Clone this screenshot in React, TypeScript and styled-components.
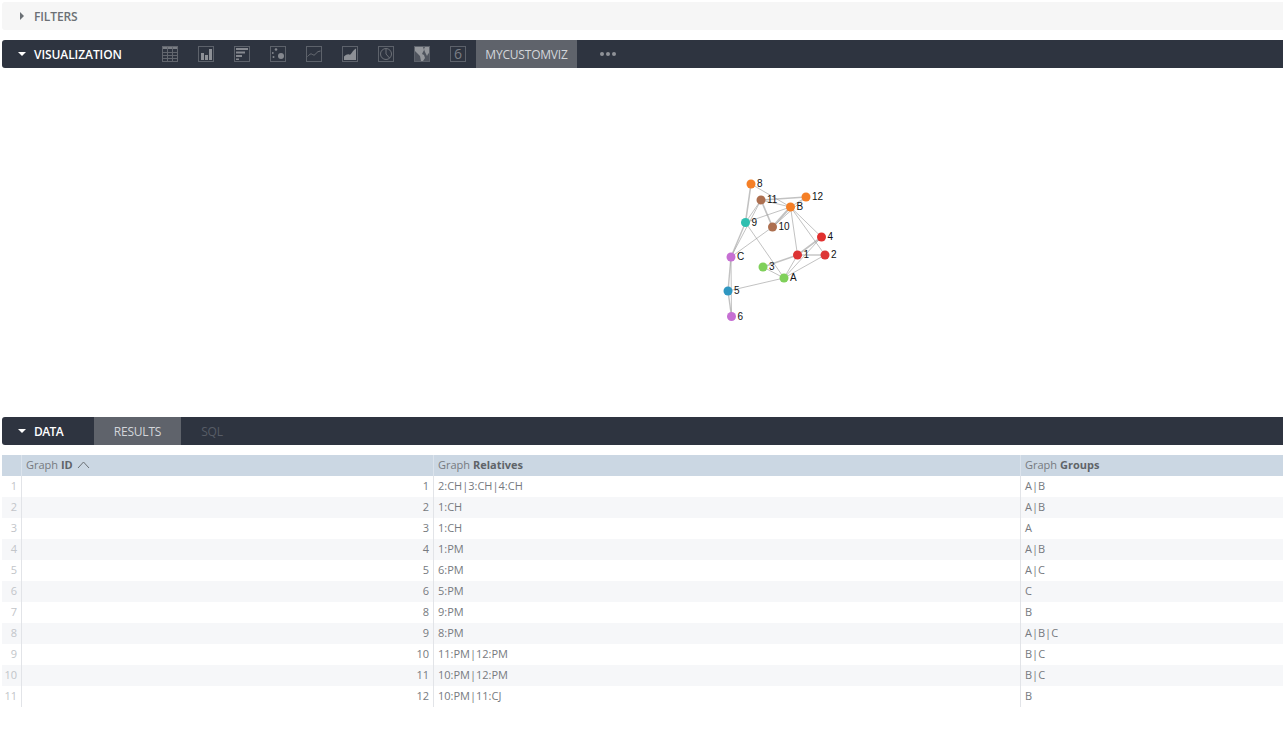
import React from "react";
import styled, { createGlobalStyle } from "styled-components";

const Global = createGlobalStyle`
  html, body { margin: 0; padding: 0; background: #fff; }
  body { font-family: "Open Sans", "Liberation Sans", sans-serif; color: #64686e; overflow: hidden; }
`;

const Page = styled.div`
  width: 1283px;
  height: 735px;
  padding: 2px 0 0 2px;
  box-sizing: border-box;
  display: flex;
  flex-direction: column;
  overflow: hidden;
`;

const FilterBar = styled.div`
  height: 28px;
  flex: none;
  background: #f6f6f6;
  border-radius: 3px 0 0 3px;
  display: flex;
  align-items: center;
  padding-left: 15px;
  gap: 7px;
  margin-bottom: 10px;
`;

const FilterLabel = styled.span`
  font-size: 12px;
  font-weight: 600;
  letter-spacing: -0.1px;
  color: #6b7075;
  text-transform: uppercase;
`;

const DarkBar = styled.div`
  height: 28px;
  flex: none;
  background: #2e3440;
  border-radius: 3px 0 0 3px;
  display: flex;
  align-items: stretch;
`;

const BarTitle = styled.div<{ $width: number; $tight?: boolean }>`
  width: ${(p) => p.$width}px;
  flex: none;
  box-sizing: border-box;
  display: flex;
  align-items: center;
  padding-left: 15px;
  gap: 7px;
  color: #fff;
  font-size: 12px;
  font-weight: 600;
  letter-spacing: ${(p) => (p.$tight ? "-0.6px" : "-0.08px")};
`;

const IconRow = styled.div`
  display: flex;
  align-items: center;
  gap: 20px;
  padding-right: 10px;
`;

const VizIcon = styled.svg`
  width: 16px;
  height: 16px;
  flex: none;
  display: block;
`;

const NumberIcon = styled.div`
  width: 16px;
  height: 16px;
  flex: none;
  box-sizing: border-box;
  border: 1px solid #5d626b;
  font-size: 14px;
  line-height: 14px;
  text-align: center;
  color: #7b7f86;
`;

const TabButton = styled.div<{ $active?: boolean; $muted?: boolean; $width: number }>`
  width: ${(p) => p.$width}px;
  flex: none;
  display: flex;
  align-items: center;
  justify-content: center;
  font-size: 12px;
  letter-spacing: -0.2px;
  background: ${(p) => (p.$active ? "#5f636b" : "transparent")};
  color: ${(p) => (p.$muted ? "#575c66" : "#d3d6da")};
`;

const Dots = styled.div`
  margin-left: 23px;
  display: flex;
  align-items: center;
  gap: 2px;
`;

const Dot = styled.span`
  width: 4px;
  height: 4px;
  border-radius: 50%;
  background: #8f9298;
`;

const VizPanel = styled.div`
  height: 349px;
  flex: none;
`;

const Graph = styled.svg`
  display: block;
  width: 1281px;
  height: 349px;
`;

const NodeLabel = styled.text`
  font-family: "Liberation Sans", Arial, sans-serif;
  font-size: 10px;
  fill: #111;
`;

const DataTable = styled.div`
  margin-top: 10px;
  display: grid;
  grid-template-columns: 20px 412px 587px 262px;
  font-size: 11px;
  line-height: 20px;
`;

const Cell = styled.div<{ $stripe?: boolean; $right?: boolean; $head?: boolean; $index?: boolean }>`
  height: 21px;
  box-sizing: border-box;
  white-space: nowrap;
  padding: ${(p) => (p.$index ? "0 4px 0 0" : "0 4px")};
  text-align: ${(p) => (p.$right || p.$index ? "right" : "left")};
  color: ${(p) => (p.$index ? "#c2c5c9" : "#767a80")};
  background: ${(p) => (p.$head ? "#cbd7e3" : p.$stripe ? "#f6f7f9" : "#fff")};
  border-right: 1px solid ${(p) => (p.$head ? "#dbe3ec" : "#e2e4e8")};
  &:nth-child(4n) { border-right: 0; }
`;

const HeadStrong = styled.strong`
  font-weight: 700;
  color: #5f6469;
`;

const SortIcon = styled.svg`
  width: 13px;
  height: 8px;
  margin-left: 4px;
  vertical-align: 0;
`;

type Edge = [string, string, number?];

const nodes: Record<string, { x: number; y: number; c: string }> = {
  "8": { x: 751, y: 116, c: "#f57f26" },
  "11": { x: 761, y: 132, c: "#ad6f4f" },
  "12": { x: 806, y: 129, c: "#f57f26" },
  B: { x: 790.5, y: 139, c: "#f57f26" },
  "9": { x: 745.5, y: 154.5, c: "#2fbfb0" },
  "10": { x: 772.5, y: 159, c: "#ad6f4f" },
  "4": { x: 821.5, y: 169, c: "#e1302f" },
  C: { x: 731, y: 189, c: "#c66fd3" },
  "1": { x: 797.5, y: 187, c: "#dd3434" },
  "2": { x: 825, y: 187, c: "#dd3434" },
  "3": { x: 763, y: 199, c: "#7fd05a" },
  A: { x: 784, y: 210, c: "#7fd05a" },
  "5": { x: 728, y: 223, c: "#2f97c1" },
  "6": { x: 731.5, y: 248.5, c: "#c66fd3" },
};

const edges: Edge[] = [
  ["8", "9", 1.6], ["8", "B"], ["11", "B"], ["11", "12", 1.6], ["12", "B"], ["10", "B", 2],
  ["11", "10", 1.6], ["12", "10"], ["9", "B"], ["9", "11"], ["9", "C", 1.4], ["9", "A"], ["10", "C"], ["11", "C"],
  ["C", "5", 1.4], ["C", "6"], ["5", "6", 1.4], ["5", "A"], ["1", "A"], ["2", "A"], ["3", "A"],
  ["4", "A"], ["1", "3", 1.4], ["1", "4", 1.6], ["1", "2", 1.4], ["B", "1"], ["B", "2"], ["B", "4"],
];

const order = ["8", "11", "12", "B", "9", "10", "4", "C", "1", "2", "3", "A", "5", "6"];

const rows: [string, string, string][] = [
  ["1", "2:CH|3:CH|4:CH", "A|B"],
  ["2", "1:CH", "A|B"],
  ["3", "1:CH", "A"],
  ["4", "1:PM", "A|B"],
  ["5", "6:PM", "A|C"],
  ["6", "5:PM", "C"],
  ["8", "9:PM", "B"],
  ["9", "8:PM", "A|B|C"],
  ["10", "11:PM|12:PM", "B|C"],
  ["11", "10:PM|12:PM", "B|C"],
  ["12", "10:PM|11:CJ", "B"],
];

const Frame = () => <rect x="0.5" y="0.5" width="15" height="15" fill="none" stroke="#5d626b" />;

const icons: React.ReactNode[] = [
  <g key="t" stroke="#62666e" fill="none">
    <rect x="0" y="0" width="16" height="3" fill="#7a7e85" stroke="none" />
    <rect x="0.5" y="0.5" width="15" height="15" />
    <path d="M0 6.5h16M0 9.5h16M0 12.5h16M5.5 0v16M10.5 0v16" />
  </g>,
  <g key="b">
    <Frame />
    <path d="M3 7h3v7H3zM7 9h3v5H7zM11 3h3v11h-3z" fill="#8d9096" />
  </g>,
  <g key="h">
    <Frame />
    <path d="M2 2h12v2H2zM2 5.5h9v2H2zM2 9h6v2H2zM2 12.500h3v1.500H2z" fill="#85888f" />
  </g>,
  <g key="s">
    <Frame />
    <circle cx="6" cy="3.500" r="1.300" fill="#85888f" />
    <circle cx="2.800" cy="7" r="0.900" fill="#85888f" />
    <circle cx="3.500" cy="11" r="1" fill="#85888f" />
    <circle cx="11" cy="10" r="3" fill="#85888f" />
  </g>,
  <g key="l">
    <Frame />
    <path d="M1.500 10.500c3-3 3.500-3 5-2s2.500.5 3.500-1 2-2 4.500-2.500" fill="none" stroke="#6f737a" />
  </g>,
  <g key="a">
    <Frame />
    <path d="M2 14v-3.500c2-1.500 3.500-2.500 5-2s2-.5 3-2 2.500-3.500 4-4V14z" fill="#8d9096" />
  </g>,
  <g key="p" fill="none" stroke="#6d7178">
    <Frame />
    <circle cx="8" cy="8" r="5.500" />
    <path d="M8 2.500V8l3.500 4" />
  </g>,
  <g key="m">
    <rect x="0" y="0" width="16" height="16" fill="#4f545e" />
    <path d="M1 1h8l1 3-2 4 2 1 1 3-2 3H7l-1-5-3-3-2-2zM11 1h4v6l-1 1-1 2-2-4-1-3z" fill="#94979c" />
    <Frame />
  </g>,
];

const Caret = ({ down, color }: { down?: boolean; color: string }) => (
  <svg width="10" height="10" viewBox="0 0 10 10" style={{ flex: "none" }}>
    {down ? <path d="M1 3h8L5 7z" fill={color} /> : <path d="M3 1l4 4-4 4z" fill={color} />}
  </svg>
);

export default function App() {
  return (
    <Page>
      <Global />
      <FilterBar>
        <Caret color="#6b7075" />
        <FilterLabel>Filters</FilterLabel>
      </FilterBar>

      <DarkBar>
        <BarTitle $width={160}>
          <Caret down color="#fff" />
          VISUALIZATION
        </BarTitle>
        <IconRow>
          {icons.map((icon, i) => (
            <VizIcon key={i} viewBox="0 0 16 16">{icon}</VizIcon>
          ))}
          <NumberIcon>6</NumberIcon>
        </IconRow>
        <TabButton $active $width={101}>MYCUSTOMVIZ</TabButton>
        <Dots><Dot /><Dot /><Dot /></Dots>
      </DarkBar>

      <VizPanel>
        <Graph viewBox="2 0 1281 349">
          {edges.map(([a, b, w], i) => (
            <line
              key={i}
              x1={nodes[a].x}
              y1={nodes[a].y}
              x2={nodes[b].x}
              y2={nodes[b].y}
              stroke="#999"
              strokeOpacity={0.6}
              strokeWidth={w ?? 1}
            />
          ))}
          {order.map((k) => (
            <circle key={k} cx={nodes[k].x} cy={nodes[k].y} r={4.5} fill={nodes[k].c} />
          ))}
          {order.map((k) => (
            <NodeLabel key={k} x={nodes[k].x + 6} y={nodes[k].y + 3}>{k}</NodeLabel>
          ))}
        </Graph>
      </VizPanel>

      <DarkBar>
        <BarTitle $width={92} $tight>
          <Caret down color="#fff" />
          DATA
        </BarTitle>
        <TabButton $active $width={87}>RESULTS</TabButton>
        <TabButton $muted $width={62}>SQL</TabButton>
      </DarkBar>

      <DataTable>
        <Cell $head $index />
        <Cell $head>
          Graph <HeadStrong>ID</HeadStrong>
          <SortIcon viewBox="0 0 13 8"><path d="M1 7l5.500-6L12 7" fill="none" stroke="#6b7075" /></SortIcon>
        </Cell>
        <Cell $head>Graph <HeadStrong>Relatives</HeadStrong></Cell>
        <Cell $head>Graph <HeadStrong>Groups</HeadStrong></Cell>
        {rows.map((r, i) => (
          <React.Fragment key={i}>
            <Cell $index $stripe={i % 2 === 1}>{i + 1}</Cell>
            <Cell $right $stripe={i % 2 === 1}>{r[0]}</Cell>
            <Cell $stripe={i % 2 === 1}>{r[1]}</Cell>
            <Cell $stripe={i % 2 === 1}>{r[2]}</Cell>
          </React.Fragment>
        ))}
      </DataTable>
    </Page>
  );
}
